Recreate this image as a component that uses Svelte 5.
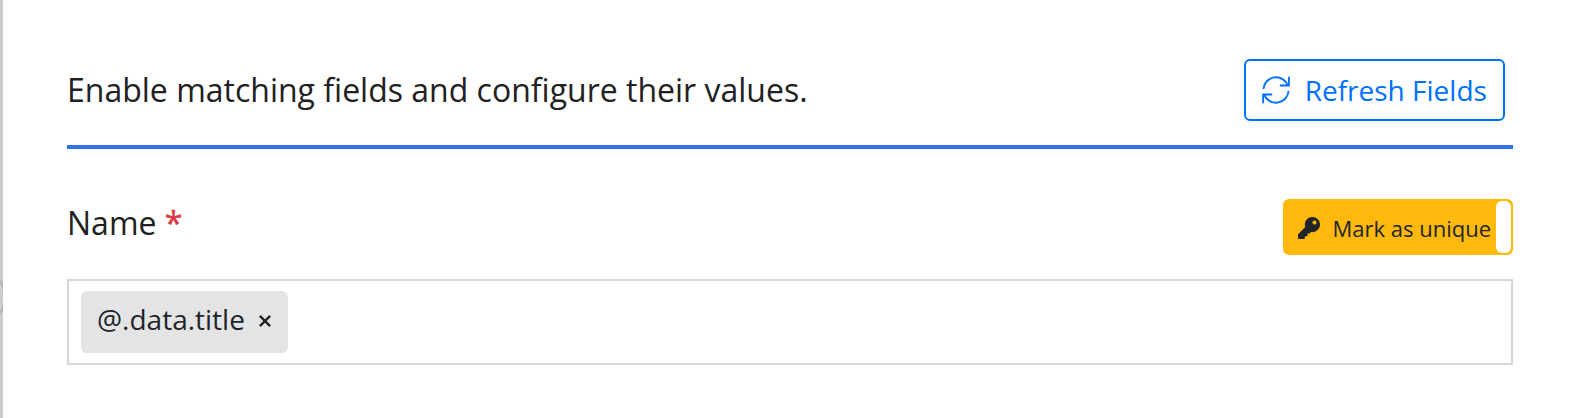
<script>
    let fieldName = "Name";
    let tags = ["@.data.title"];
    let unique = true;

    const remove = (tag) => {
        tags = tags.filter(t => t != tag);
    }
    const toggle = () => {
        unique = !unique;
    }
</script>

<div class="page">
    <div class="edge">
        <svg width="3" height="40" viewBox="0 0 3 40">
            <circle cx="-27" cy="20" r="31.5" fill="none" stroke="#b4b4b4" stroke-width="2"/>
        </svg>
    </div>
    <main>
        <header>
            <p>Enable matching fields and configure their values.</p>
            <button class="refresh">
                <svg width="28" height="28" viewBox="0 0 28 28" fill="none" stroke="currentColor" stroke-width="1.9">
                    <path d="M1.4 13A12.7 12.7 0 0 1 26 9.6M26.9 .8V9.5H17.8"/>
                    <path d="M26.6 15A12.7 12.7 0 0 1 2 18.4M1.1 27.2V18.5H10.2"/>
                </svg>
                <span>Refresh Fields</span>
            </button>
        </header>
        <div class="field">
            <div class="name">{fieldName} <span>*</span></div>
            <button class="unique" class:off={!unique} on:click={toggle}>
                <svg width="22" height="22" viewBox="0 0 512 512" fill="currentColor">
                    <path d="M512 176.001C512 273.203 433.202 352 336 352c-11.22 0-22.19-1.062-32.827-3.069l-24.012 27.014A23.999 23.999 0 0 1 261.223 384H224v40c0 13.255-10.745 24-24 24h-40v40c0 13.255-10.745 24-24 24H24c-13.255 0-24-10.745-24-24v-78.059c0-6.365 2.529-12.47 7.029-16.971l161.802-161.802C163.108 213.814 160 195.271 160 176 160 78.798 238.797.001 335.999 0 433.488-.001 512 78.511 512 176.001zM336 128c0 26.51 21.49 48 48 48s48-21.49 48-48-21.49-48-48-48-48 21.49-48 48z"/>
                </svg>
                <span class="text">Mark as unique</span>
                <span class="handle"></span>
            </button>
        </div>
        <div class="tags">
            {#each tags as tag}
                <div class="tag">
                    <span>{tag}</span>
                    <button on:click={() => remove(tag)} aria-label="Remove">
                        <svg width="12" height="12" viewBox="0 0 12 12" stroke="currentColor" stroke-width="2.5">
                            <path d="M.9 .9L11.1 11.1M11.1 .9L.9 11.1"/>
                        </svg>
                    </button>
                </div>
            {/each}
        </div>
    </main>
</div>

<style>
    :global(body){background: #fff;}
    .page{
        display: flex;
        height: 418px;
        overflow: hidden;
        color: #212121;
        font-family: "Open Sans", "Noto Sans", sans-serif;
    }
    .edge{
        width: 3px;
        padding-top: 277px;
        box-sizing: border-box;
        height: 418px;
        background: #cdcdcd;
    }
    svg{
        display: block;
        flex: none;
    }
    main{
        flex: 1;
        padding: 59px 63px 0 64px;
    }
    button{
        margin: 0;
        border: none;
        font-family: inherit;
        cursor: pointer;
        display: flex;
        align-items: center;
        box-sizing: border-box;
        white-space: nowrap;
    }
    header{
        display: flex;
        justify-content: space-between;
        height: 90px;
        padding-right: 8px;
        box-sizing: border-box;
        border-bottom: 4px solid #2f73e9;
    }
    p{
        margin: 0;
        font-size: 32px;
        line-height: 62px;
    }
    .refresh{
        width: 261px;
        height: 62px;
        padding: 0 0 0 16px;
        border: 2px solid #0070ff;
        border-radius: 6px;
        background: #fff;
        color: #0070ff;
        font-size: 28px;
        gap: 14.7px;
    }
    .field{
        display: flex;
        justify-content: space-between;
        padding-top: 50px;
        height: 80px;
    }
    .name{
        font-size: 32px;
        line-height: 48px;
    }
    .name span{
        color: #dc3545;
        -webkit-text-stroke: .5px #dc3545;
    }
    .unique{
        width: 230px;
        height: 56px;
        padding: 2px 2px 2px 15px;
        border-radius: 6px;
        background: #ffb90c;
        color: #212529;
        font-size: 22px;
        text-align: left;
    }
    .unique.off{background: #e4e4e4;}
    .unique svg{margin-top: 2px;}
    .text{
        flex: 1;
        padding: 1px 0 0 12.5px;
    }
    .handle{
        width: 15px;
        height: 52px;
        border-radius: 6px;
        background: #fff;
    }
    .tags{
        display: flex;
        height: 86px;
        padding: 10px 12px;
        box-sizing: border-box;
        border: 2px solid #d8d8d8;
    }
    .tag{
        display: flex;
        width: 207px;
        height: 62px;
        padding-left: 16px;
        box-sizing: border-box;
        border-radius: 6px;
        background: #e4e4e4;
        color: #212529;
        font-size: 28px;
        line-height: 57px;
    }
    .tag button{
        height: 60px;
        padding: 0;
        margin-left: 14px;
        background: none;
        color: inherit;
    }
</style>
